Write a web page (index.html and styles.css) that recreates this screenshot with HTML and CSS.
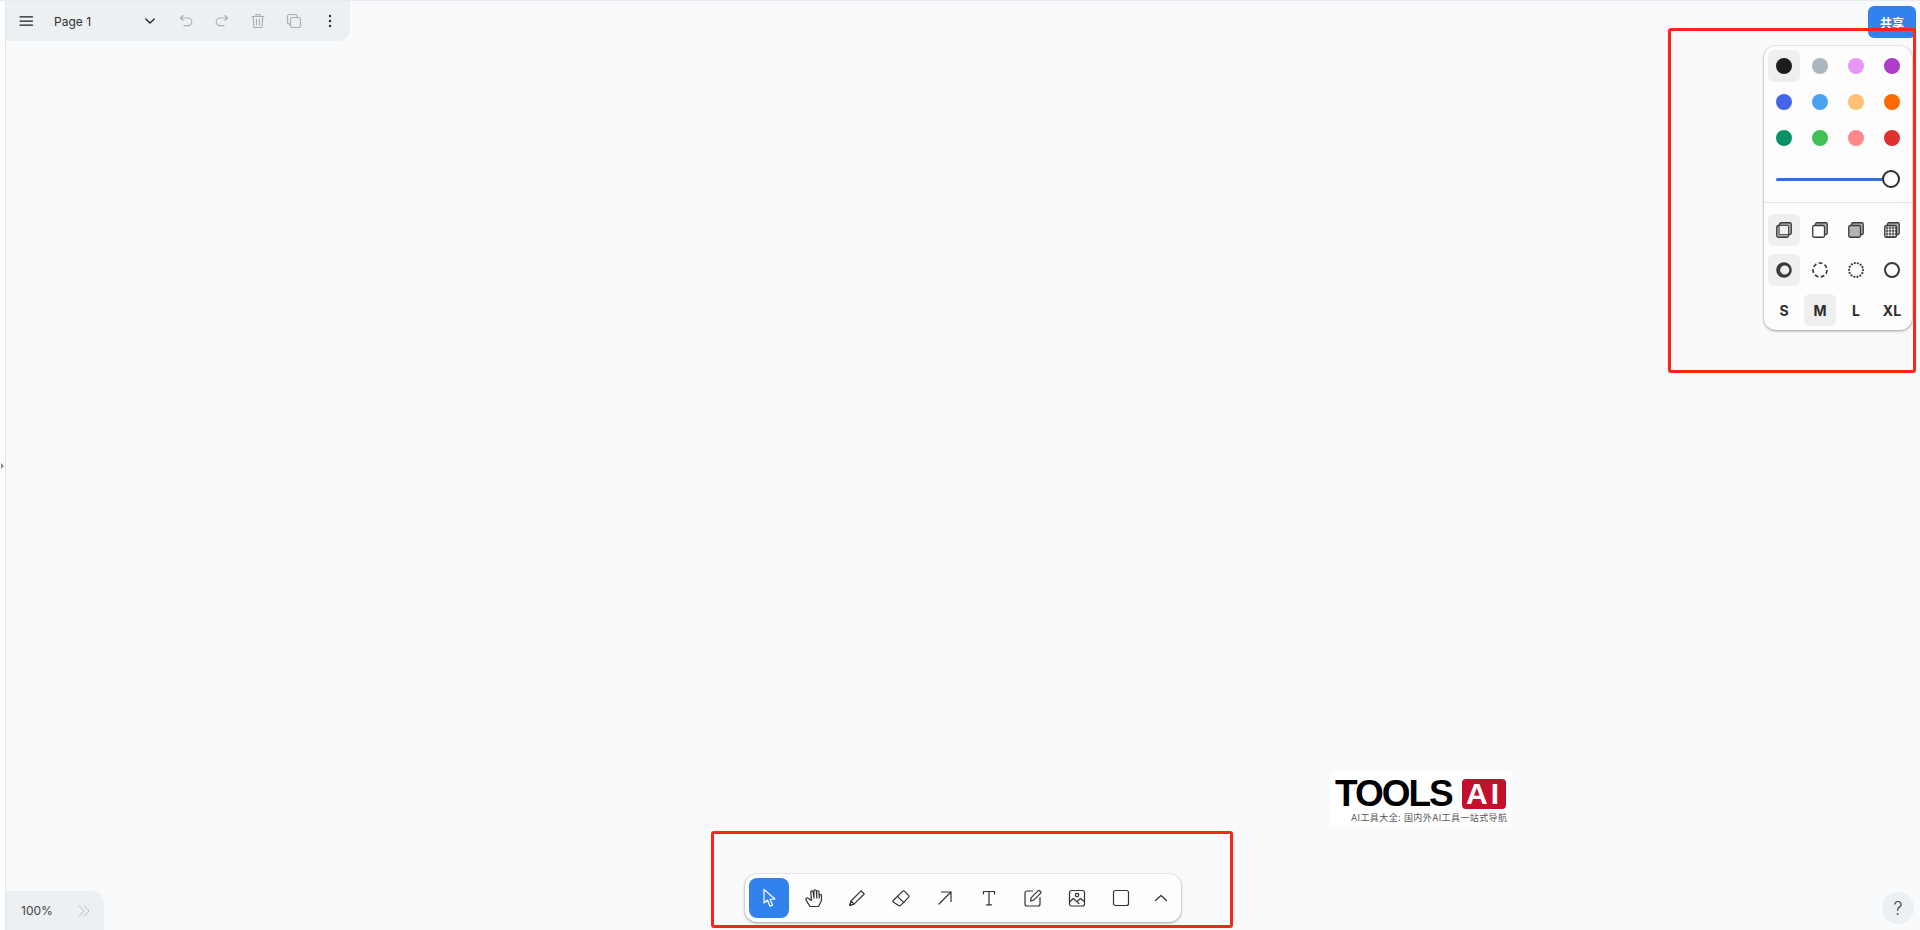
FILE: index.html
```html
<!DOCTYPE html>
<html lang="en">

<head>
    <meta charset="UTF-8">
    <meta name="viewport" content="width=device-width, initial-scale=1.0">
    <title>Whiteboard</title>
    <link rel="stylesheet" href="styles.css">
</head>

<body>
    <!-- Collapsed side rail -->
    <div class="rail">
        <span class="rail-handle"></span>
    </div>

    <div class="canvas">
        <!-- Page menu -->
        <div class="page-menu">
            <button class="icon-btn dark">
                <svg viewBox="0 0 16 16"><path d="M2 3.800h12.500M2 8h12.500M2 12.200h12.500"/></svg>
            </button>
            <span class="page-name">Page 1</span>
            <button class="icon-btn dark">
                <svg viewBox="0 0 16 16"><path d="M3.800 6l4.200 4 4.200-4"/></svg>
            </button>
            <button class="icon-btn disabled">
                <svg viewBox="0 0 16 16"><path d="M5 2.500L2.500 5 5 7.500M2.500 5H10a3.800 3.800 0 0 1 0 7.600H6"/></svg>
            </button>
            <button class="icon-btn disabled">
                <svg viewBox="0 0 16 16"><path d="M11 2.500L13.500 5 11 7.500M13.500 5H6a3.800 3.800 0 0 0 0 7.600h4"/></svg>
            </button>
            <button class="icon-btn disabled">
                <svg viewBox="0 0 16 16"><path d="M2 3.500h12M5.800 3.500V1.800h4.400v1.700M3.200 3.500l.7 11h8.200l.7-11M6.500 6v6M9.500 6v6"/></svg>
            </button>
            <button class="icon-btn disabled">
                <svg viewBox="0 0 16 16"><rect x="1.500" y="1.500" width="9.500" height="9.500" rx="2"/><rect class="panel-fill" x="4.500" y="4.500" width="10" height="10" rx="2"/></svg>
            </button>
            <button class="icon-btn">
                <svg viewBox="0 0 16 16"><circle class="solid" cx="8" cy="3" r="1.200"/><circle class="solid" cx="8" cy="8" r="1.200"/><circle class="solid" cx="8" cy="13" r="1.200"/></svg>
            </button>
        </div>

        <button class="share-btn">共享</button>

        <!-- Style panel -->
        <div class="style-panel">
            <div class="cell-grid">
                <div class="cell selected"><span class="dot black"></span></div>
                <div class="cell"><span class="dot grey"></span></div>
                <div class="cell"><span class="dot violet"></span></div>
                <div class="cell"><span class="dot purple"></span></div>
                <div class="cell"><span class="dot blue"></span></div>
                <div class="cell"><span class="dot sky"></span></div>
                <div class="cell"><span class="dot peach"></span></div>
                <div class="cell"><span class="dot orange"></span></div>
                <div class="cell"><span class="dot teal"></span></div>
                <div class="cell"><span class="dot green"></span></div>
                <div class="cell"><span class="dot pink"></span></div>
                <div class="cell"><span class="dot red"></span></div>
            </div>

            <div class="opacity-row">
                <div class="slider-track"></div>
                <span class="slider-thumb"></span>
            </div>

            <div class="cell-grid lower">
                <div class="cell selected">
                    <svg class="style-icon" viewBox="0 0 16 16">
                        <rect class="fill-soft" x="3.500" y="0.750" width="11.750" height="11.750" rx="1.500"/>
                        <rect class="fill-soft" x="0.750" y="3.500" width="11.750" height="11.750" rx="1.500"/>
                        <rect class="fill-cell" x="3.500" y="3.500" width="9" height="9"/>
                    </svg>
                </div>
                <div class="cell">
                    <svg class="style-icon" viewBox="0 0 16 16">
                        <rect class="fill-soft" x="3.500" y="0.750" width="11.750" height="11.750" rx="1.500"/>
                        <rect class="fill-white" x="0.750" y="3.500" width="11.750" height="11.750" rx="1.500"/>
                    </svg>
                </div>
                <div class="cell">
                    <svg class="style-icon" viewBox="0 0 16 16">
                        <rect class="fill-soft" x="3.500" y="0.750" width="11.750" height="11.750" rx="1.500"/>
                        <rect class="fill-solid" x="0.750" y="3.500" width="11.750" height="11.750" rx="1.500"/>
                    </svg>
                </div>
                <div class="cell">
                    <svg class="style-icon" viewBox="0 0 16 16">
                        <defs>
                            <pattern id="speckle" width="3" height="3" patternUnits="userSpaceOnUse">
                                <rect class="no-stroke" width="3" height="3" fill="#444"/>
                                <circle class="no-stroke" cx="1.500" cy="1.500" r="1.150" fill="#fff"/>
                            </pattern>
                        </defs>
                        <rect class="fill-soft" x="3.500" y="0.750" width="11.750" height="11.750" rx="1.500"/>
                        <rect fill="url(#speckle)" x="0.750" y="3.500" width="11.750" height="11.750" rx="1.500"/>
                    </svg>
                </div>

                <div class="cell selected">
                    <svg class="style-icon" viewBox="0 0 16 16">
                        <path class="solid" fill-rule="evenodd" d="M8 0.200a7.800 7.800 0 1 0 0 15.600a7.800 7.800 0 1 0 0-15.600zM8.700 3.500a4.600 4.500 0 1 1 0 9a4.600 4.500 0 1 1 0-9z"/>
                    </svg>
                </div>
                <div class="cell">
                    <svg class="style-icon" viewBox="0 0 16 16"><circle class="dashed" cx="8" cy="8" r="7"/></svg>
                </div>
                <div class="cell">
                    <svg class="style-icon" viewBox="0 0 16 16"><circle class="dotted" cx="8" cy="8" r="7"/></svg>
                </div>
                <div class="cell">
                    <svg class="style-icon" viewBox="0 0 16 16"><circle class="ring" cx="8" cy="8" r="7"/></svg>
                </div>

                <div class="cell size">S</div>
                <div class="cell size selected">M</div>
                <div class="cell size">L</div>
                <div class="cell size">XL</div>
            </div>
        </div>

        <!-- Tools -->
        <div class="toolbar">
            <button class="tool active">
                <svg viewBox="0 0 24 24"><path d="M7 3.500V17l3.500-3 2.500 6.200 2.600-1.100-2.600-5.700 4.900-.4z"/></svg>
            </button>
            <button class="tool">
                <svg viewBox="0 0 24 24"><path d="M9 20.500h8.500l3-6V9.500c0-1.600-2.200-1.600-2.200 0V12l-.3-6c-.1-1.700-2.300-1.700-2.300 0l.1 6-.5-7c-.1-1.700-2.400-1.700-2.400 0l.1 7-.9-6c-.2-1.600-2.400-1.400-2.300.2l.6 8.300-3.200-2.300c-1.200-.9-3 .4-2.200 1.700z"/></svg>
            </button>
            <button class="tool">
                <svg viewBox="0 0 24 24"><path d="M6 15l10-10.200 3.200 3.200L9 18.200zM6 15l-1.500 4.500L9 18.200"/><path class="solid" d="M4.300 19.700l.8-2.900 2.100 2.100z"/></svg>
            </button>
            <button class="tool">
                <svg viewBox="0 0 24 24"><path d="M4.300 14.500L13.500 5.300c.6-.6 1.500-.6 2.100 0l4 4c.6.6.6 1.500 0 2.100l-8 8c-.6.6-1.500.6-2.100 0l-5.200-3.400c-.5-.4-.5-1 0-1.500zM8.500 10.300l6.400 6.400"/></svg>
            </button>
            <button class="tool">
                <svg viewBox="0 0 24 24"><path d="M6 18L18 6M8.500 6H18v9.500"/></svg>
            </button>
            <button class="tool">
                <svg viewBox="0 0 24 24"><path d="M6.500 8V5.500h11V8M12 5.500V18.800M9.500 18.800h5"/></svg>
            </button>
            <button class="tool">
                <svg viewBox="0 0 24 24"><path d="M11.500 5H6a2 2 0 0 0-2 2v11a2 2 0 0 0 2 2h11a2 2 0 0 0 2-2v-6.500M9.500 15l.7-3.300L17 4.800c.5-.5 1.300-.5 1.800 0l.7.7c.5.500.5 1.300 0 1.800l-6.800 6.900z"/></svg>
            </button>
            <button class="tool">
                <svg viewBox="0 0 24 24"><rect x="4.500" y="4.500" width="15" height="15.500" rx="2"/><circle cx="12" cy="9" r="1.700"/><path d="M4.500 16l3.800-3.500 5.700 5M12.500 15l3.200-2.500 3.800 3.300"/></svg>
            </button>
            <button class="tool">
                <svg viewBox="0 0 24 24"><rect x="4.500" y="4.500" width="15" height="15" rx="2"/></svg>
            </button>
            <button class="tool narrow">
                <svg viewBox="0 0 24 24"><path d="M6.500 14.500L12 9.500l5.500 5"/></svg>
            </button>
        </div>

        <!-- Zoom -->
        <div class="zoom-menu">
            <span class="zoom-value">100%</span>
            <svg class="zoom-arrows" viewBox="0 0 12 12"><path d="M1 .8L6 6 1 11.200M6 .8L11 6l-5 5.200"/></svg>
        </div>

        <button class="help-btn">?</button>

        <!-- Logo stamp -->
        <div class="logo">
            <div class="logo-top">
                <span class="logo-word">TOOLS</span>
                <span class="logo-badge">AI</span>
            </div>
            <div class="logo-sub">AI工具大全: 国内外AI工具一站式导航</div>
        </div>
    </div>

    <!-- Red annotation frames -->
    <div class="frame frame-style"></div>
    <div class="frame frame-tools"></div>
</body>

</html>
```

FILE: styles.css
```css
* {
    box-sizing: border-box;
}

html,
body {
    height: 100%;
}

body {
    display: flex;
    margin: 0;
    overflow: hidden;
    background-color: #fff;
    border-top: 1px solid #e8eaed;
    font-family: Inter, "Noto Sans CJK SC", sans-serif;
    color: #2d2d2d;
}

button {
    padding: 0;
    border: none;
    background: none;
    font-family: inherit;
    color: inherit;
}

svg {
    display: block;
    fill: none;
    stroke: currentColor;
    stroke-width: 1.1;
    stroke-linecap: round;
    stroke-linejoin: round;
}

.solid {
    fill: currentColor;
    stroke: none;
}

.no-stroke {
    stroke: none;
}

/* side rail */
.rail {
    display: flex;
    align-items: center;
    flex: 0 0 6px;
    border-right: 1px solid #e3e5e8;
    background-color: #fff;
}

.rail-handle {
    width: 0;
    height: 0;
    margin-left: 1px;
    border-left: 3px solid #8c8c8c;
    border-top: 3px solid transparent;
    border-bottom: 3px solid transparent;
}

.canvas {
    position: relative;
    flex: 1;
    background-color: #f9fafc;
}

/* page menu */
.page-menu {
    position: absolute;
    top: 0;
    left: 0;
    display: flex;
    align-items: center;
    width: 344px;
    height: 40px;
    padding-left: 2px;
    background-color: #edf0f2;
    border-bottom-right-radius: 12px;
}

.icon-btn {
    display: flex;
    align-items: center;
    justify-content: center;
    flex: 0 0 36px;
    height: 40px;
}

.icon-btn svg {
    width: 16px;
    height: 16px;
}

.icon-btn.dark svg {
    color: #1d1d1d;
    stroke-width: 1.250;
}

.icon-btn.disabled {
    color: #a9adb1;
}

.panel-fill {
    fill: #edf0f2;
}

.page-name {
    flex: 0 0 88px;
    padding-left: 10px;
    font-size: 12px;
}

.share-btn {
    position: absolute;
    top: 5px;
    right: 4px;
    width: 48px;
    height: 32px;
    border-radius: 6px;
    background-color: #3182ed;
    color: #fff;
    font-size: 12px;
    font-weight: 700;
}

/* style panel */
.style-panel {
    position: absolute;
    top: 45px;
    right: 8px;
    width: 148px;
    padding: 4px;
    border-radius: 12px;
    background-color: #fdfdfd;
    box-shadow: 0 1px 3px rgba(0, 0, 0, 0.35), 0 0 2px rgba(0, 0, 0, 0.12);
}

.cell-grid {
    display: grid;
    grid-template-columns: repeat(4, 32px);
    gap: 4px;
}

.cell-grid.lower {
    gap: 8px 4px;
    margin: 0 -4px;
    padding: 11px 4px 0;
    border-top: 1px solid #e6e6e6;
}

.cell {
    display: flex;
    align-items: center;
    justify-content: center;
    height: 32px;
    border-radius: 6px;
}

.cell.selected {
    background-color: #efefef;
}

.dot {
    width: 16px;
    height: 16px;
    border-radius: 50%;
}

.black { background-color: #1d1d1d; }
.grey { background-color: #adb5bd; }
.violet { background-color: #e599f7; }
.purple { background-color: #ae3ec9; }
.blue { background-color: #4465e9; }
.sky { background-color: #4ba1f1; }
.peach { background-color: #ffc078; }
.orange { background-color: #fb6a04; }
.teal { background-color: #099268; }
.green { background-color: #40c057; }
.pink { background-color: #ff8787; }
.red { background-color: #e03131; }

.opacity-row {
    position: relative;
    height: 48px;
}

.slider-track {
    position: absolute;
    top: 24px;
    left: 8px;
    width: 112px;
    height: 3px;
    border-radius: 2px;
    background-color: #2f74d0;
}

.slider-thumb {
    position: absolute;
    top: 16px;
    left: 114px;
    width: 18px;
    height: 18px;
    border: 2px solid #2d2d2d;
    border-radius: 50%;
    background-color: #fdfdfd;
}

.style-icon {
    width: 16px;
    height: 16px;
    color: #3a3a3a;
    stroke-width: 1.300;
}

.fill-soft {
    fill: #b0b0b0;
}

.fill-cell {
    fill: #efefef;
    stroke-width: 0.800;
}

.fill-white {
    fill: #fff;
}

.fill-solid {
    fill: #b4b4b4;
}

.dashed {
    stroke-width: 1.700;
    stroke-linecap: butt;
    stroke-dasharray: 3.900 2.380;
}

.dotted {
    stroke-width: 2.100;
    stroke-dasharray: 0.100 3.040;
}

.ring {
    stroke-width: 2;
}

.size {
    font-size: 14px;
    font-weight: 700;
}

/* tools */
.toolbar {
    position: absolute;
    bottom: 8px;
    left: 50%;
    display: flex;
    gap: 4px;
    padding: 4px;
    border-radius: 12px;
    background-color: #fdfdfd;
    box-shadow: 0 1px 3px rgba(0, 0, 0, 0.35), 0 0 2px rgba(0, 0, 0, 0.12);
    transform: translateX(-50%);
}

.tool {
    display: flex;
    align-items: center;
    justify-content: center;
    width: 40px;
    height: 40px;
    border-radius: 8px;
    color: #333;
}

.tool svg {
    width: 24px;
    height: 24px;
    stroke-width: 1.200;
}

.tool.active {
    background-color: #3182ed;
    color: #fff;
}

.tool.narrow {
    width: 32px;
}

/* zoom and help */
.zoom-menu {
    position: absolute;
    bottom: 0;
    left: 0;
    display: flex;
    align-items: center;
    width: 98px;
    height: 39px;
    padding-left: 15px;
    border-top-right-radius: 12px;
    background-color: #edf0f2;
}

.zoom-value {
    width: 57px;
    font-size: 12px;
    color: #444;
}

.zoom-arrows {
    width: 12px;
    height: 12px;
    color: #b9bdc1;
    stroke-width: 1;
}

.help-btn {
    position: absolute;
    right: 6px;
    bottom: 6px;
    width: 32px;
    height: 32px;
    border-radius: 50%;
    background-color: #edf0f2;
    font-size: 18px;
    font-weight: 300;
    color: #444;
}

/* logo stamp sitting on the board */
.logo {
    position: absolute;
    top: 771px;
    left: 1324px;
    width: 182px;
    height: 55px;
    padding: 7px 6px 0 5px;
    background-color: #fff;
}

.logo-top {
    display: flex;
    align-items: center;
    justify-content: space-between;
    height: 30px;
}

.logo-word {
    font-family: "Liberation Sans", Arial, sans-serif;
    font-size: 37px;
    font-weight: 700;
    line-height: 30px;
    letter-spacing: -2px;
    color: #000;
}

.logo-badge {
    width: 44px;
    height: 30px;
    border-radius: 4px;
    background-color: #c40f2b;
    font-family: "Liberation Sans", Arial, sans-serif;
    font-size: 30px;
    font-weight: 700;
    line-height: 30px;
    letter-spacing: 3px;
    text-align: center;
    color: #fff;
}

.logo-sub {
    margin-top: 4px;
    padding-left: 16px;
    font-size: 9px;
    line-height: 10px;
    letter-spacing: 0.400px;
    white-space: nowrap;
    color: #555;
}

/* annotation frames */
.frame {
    position: fixed;
    border: 3px solid #ff2318;
    border-radius: 3px;
}

.frame-style {
    top: 28px;
    left: 1668px;
    width: 248px;
    height: 345px;
}

.frame-tools {
    top: 831px;
    left: 711px;
    width: 522px;
    height: 97px;
}
```
